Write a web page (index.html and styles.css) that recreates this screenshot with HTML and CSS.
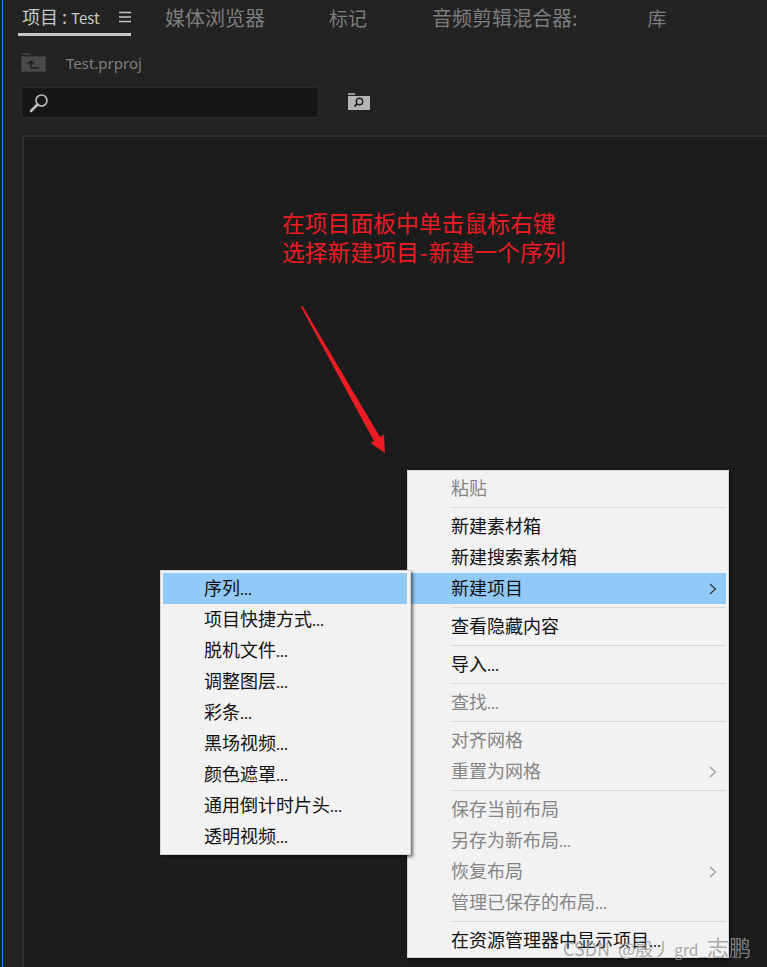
FILE: index.html
```html
<!DOCTYPE html>
<html lang="zh-CN">
<head>
<meta charset="utf-8">
<title>项目: Test</title>
<link rel="stylesheet" href="styles.css">
</head>
<body>
<div class="app">
  <nav class="tabs">
    <div class="tab tab-active"><span class="tab-label">项目 : <span class="tab-latin">Test</span></span>
      <svg class="tab-menu" width="14" height="12" viewBox="0 0 14 12"><path d="M1 1.500h12M1 6h12M1 10.500h12" stroke="#c4c4c4" stroke-width="1.400" fill="none"/></svg>
    </div>
    <div class="tab tab-media">媒体浏览器</div>
    <div class="tab tab-marks">标记</div>
    <div class="tab tab-audio">音频剪辑混合器:</div>
    <div class="tab tab-lib">库</div>
  </nav>
  <div class="path-row">
    <svg width="26" height="20" viewBox="0 0 26 20"><path d="M1 0h8v2H1z" fill="#3d3d3d"/><path d="M0.500 3.500h24v15h-24z" fill="#4a4a4a" stroke="#3a3a3a"/><path d="M7 11l3-3 3 3M10 8v7h7.500" stroke="#1c1c1c" stroke-width="1.400" fill="none"/></svg>
    <span class="path-name">Test.prproj</span>
  </div>
  <div class="search-row">
    <div class="search-box">
      <svg width="20" height="20" viewBox="0 0 20 20"><circle cx="12.500" cy="7.500" r="5.500" stroke="#bdbdbd" stroke-width="1.600" fill="none"/><path d="M8.500 11.500L2 18" stroke="#bdbdbd" stroke-width="2.600" stroke-linecap="round"/></svg>
    </div>
    <svg class="bin-search" width="22" height="18" viewBox="0 0 22 18"><path d="M0 0h7v2H0z" fill="#9a9a9a"/><path d="M0 3h22v14H0z" fill="#b4b4b4"/><circle cx="11.500" cy="8.500" r="3.200" stroke="#1e1e1e" stroke-width="1.400" fill="none"/><path d="M9.200 10.800L6.500 13.500" stroke="#1e1e1e" stroke-width="1.800"/></svg>
  </div>
  <main class="content"></main>

  <p class="note">在项目面板中单击鼠标右键<br>选择新建项目<span class="dash">-</span>新建一个序列</p>
  <svg class="arrow" width="90" height="152" viewBox="0 0 90 152"><path d="M0 1L1.500 0L79 131L83 128.500L84 147L69.500 137L73 135Z" fill="#ed1c24"/></svg>

  <div class="menu menu-main">
    <div class="item off">粘贴</div>
    <div class="sep"></div>
    <div class="item">新建素材箱</div>
    <div class="item">新建搜索素材箱</div>
    <div class="item hot">新建项目<svg class="chev" width="8" height="14" viewBox="0 0 8 14"><path d="M1 2l5.500 5L1 12" stroke="#333" stroke-width="1.200" fill="none"/></svg></div>
    <div class="sep"></div>
    <div class="item">查看隐藏内容</div>
    <div class="sep"></div>
    <div class="item">导入<span class="dots">...</span></div>
    <div class="sep"></div>
    <div class="item off">查找<span class="dots">...</span></div>
    <div class="sep"></div>
    <div class="item off">对齐网格</div>
    <div class="item off">重置为网格<svg class="chev" width="8" height="14" viewBox="0 0 8 14"><path d="M1 2l5.500 5L1 12" stroke="#999" stroke-width="1.200" fill="none"/></svg></div>
    <div class="sep"></div>
    <div class="item off">保存当前布局</div>
    <div class="item off">另存为新布局<span class="dots">...</span></div>
    <div class="item off">恢复布局<svg class="chev" width="8" height="14" viewBox="0 0 8 14"><path d="M1 2l5.500 5L1 12" stroke="#999" stroke-width="1.200" fill="none"/></svg></div>
    <div class="item off">管理已保存的布局<span class="dots">...</span></div>
    <div class="sep"></div>
    <div class="item">在资源管理器中显示项目<span class="dots">...</span></div>
  </div>

  <div class="menu menu-sub">
    <div class="item hot">序列<span class="dots">...</span></div>
    <div class="item">项目快捷方式<span class="dots">...</span></div>
    <div class="item">脱机文件<span class="dots">...</span></div>
    <div class="item">调整图层<span class="dots">...</span></div>
    <div class="item">彩条<span class="dots">...</span></div>
    <div class="item">黑场视频<span class="dots">...</span></div>
    <div class="item">颜色遮罩<span class="dots">...</span></div>
    <div class="item">通用倒计时片头<span class="dots">...</span></div>
    <div class="item">透明视频<span class="dots">...</span></div>
  </div>

  <div class="watermark"><span class="wm-site">CSDN</span> @殷<span class="wm-stroke">丿</span> <span class="wm-name">grd_</span><span class="wm-cjk">志鹏</span></div>
</div>
</body>
</html>
```
FILE: styles.css
```css
* { box-sizing: border-box; }
html, body { margin: 0; padding: 0; }
body {
  background: #232323;
  font-family: "Noto Sans CJK SC", "Noto Sans", sans-serif;
}
.app {
  position: relative;
  width: 767px;
  height: 967px;
  overflow: hidden;
  background: #232323;
  display: flex;
  flex-direction: column;
}
.app::before {
  content: "";
  position: absolute;
  left: 2px;
  top: 0;
  bottom: 0;
  width: 1px;
  background: #2680eb;
}
.tabs {
  display: flex;
  align-items: flex-start;
  height: 36px;
  padding-left: 18px;
  color: #7d7d7d;
  font-size: 19px;
  line-height: 36px;
}
.tab { white-space: nowrap; }
.tab-active {
  width: 113px;
  height: 36px;
  display: flex;
  align-items: center;
  padding-left: 4px;
  border-bottom: 3px solid #c8c8c8;
  color: #c8c8c8;
  font-size: 18px;
}
.tab-label { width: 96px; }
.tab-latin { font-size: 15px; }
.tab-menu { margin-left: auto; margin-right: -1px; }
.tab-media { margin-left: 34px; font-size: 20px; }
.tab-marks { margin-left: 64px; }
.tab-audio { margin-left: 65px; font-size: 20px; }
.tab-lib { margin-left: 70px; }
.path-row {
  display: flex;
  align-items: center;
  gap: 19px;
  height: 40px;
  margin-top: 7px;
  padding-left: 21px;
  color: #7f7f7f;
  font-size: 15px;
  font-family: "Noto Sans", sans-serif;
}
.search-row {
  display: flex;
  align-items: center;
  gap: 29px;
  margin-top: 4px;
  padding-left: 21px;
}
.search-box {
  width: 298px;
  height: 31px;
  background: #161616;
  border: 1px solid #2c2c2c;
  border-radius: 3px;
  padding: 5px 0 0 7px;
}
.bin-search { margin-top: -2px; }
.content {
  flex: 1;
  margin: 17px 0 0 22px;
  background: #1c1c1c;
  border-left: 2px solid #2e2e2e;
  border-top: 2px solid #2e2e2e;
}
.note {
  position: absolute;
  left: 282px;
  top: 208px;
  margin: 0;
  color: #ed1c24;
  font-size: 22.800px;
  line-height: 29px;
}
.dash { margin: 0 1px; }
.arrow { position: absolute; left: 301px; top: 306px; }
.menu {
  position: absolute;
  background: #f2f2f2;
  border: 1px solid #d4d4d4;
  padding: 2px;
  color: #111;
  font-size: 18px;
  box-shadow: 2px 2px 3px rgba(0, 0, 0, .55);
}
.menu-main { left: 407px; top: 470px; width: 322px; height: 488px; }
.menu-sub { left: 160px; top: 570px; width: 251px; height: 285px; padding-right: 3px; }
.item {
  position: relative;
  height: 31px;
  line-height: 29px;
  padding-left: 41px;
  white-space: nowrap;
}
.dots { font-size: 14.500px; }
.item.off { color: #858585; }
.item.hot { background: #91c9f7; }
.sep {
  height: 7px;
  margin-left: 41px;
  position: relative;
}
.sep::after {
  content: "";
  position: absolute;
  left: 0;
  right: 0;
  top: 3px;
  height: 1px;
  background: #d6d6d6;
}
.chev { position: absolute; right: 9px; top: 9px; }
.watermark {
  position: absolute;
  left: 563px;
  top: 934px;
  color: rgba(150, 150, 150, .8);
  font-size: 18px;
  line-height: 24px;
  white-space: nowrap;
}
.wm-site { margin-right: 4px; }
.wm-stroke { margin-right: -1px; }
.wm-name { font-size: 15.500px; }
.wm-cjk { font-size: 22px; }
```
